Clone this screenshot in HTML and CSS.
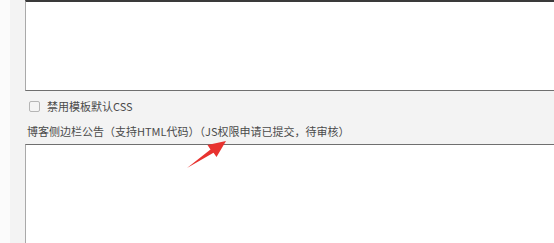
FILE: index.html
```html
<!DOCTYPE html>
<html lang="zh">
<head>
<meta charset="utf-8">
<link rel="stylesheet" href="styles.css">
</head>
<body>
<div class="page">
  <div class="main">
    <div class="area area-top"></div>
    <label class="opt"><span class="box"></span><span class="opt-text">禁用模板默认CSS</span></label>
    <div class="caption">博客侧边栏公告（支持HTML代码）（JS权限申请已提交，待审核）</div>
    <div class="area area-bottom"></div>
  </div>
</div>
<svg class="arrow" width="554" height="243" viewBox="0 0 554 243">
  <polygon points="187,168 210.5,149.5 207.5,145 226,141 216.5,157 213.5,152.8" fill="#e8322f"/>
</svg>
</body>
</html>
```
FILE: styles.css
```css
html, body {
  margin: 0;
  padding: 0;
  background: #fff;
  overflow: hidden;
  width: 554px;
  height: 243px;
}
body {
  position: relative;
  font-family: "Noto Sans CJK SC", "Liberation Sans", sans-serif;
  font-size: 11px;
  color: #4a4a4a;
}
.page {
  display: flex;
  padding-left: 10px;
  height: 243px;
  background: #fbfbfb;
}
.main {
  flex: 1;
  background: #f3f3f3;
  padding-left: 15px;
  overflow: hidden;
}
.area {
  box-sizing: border-box;
  width: 620px;
  background: #fff;
  border: 1px solid #a9a9a9;
}
.area-top {
  height: 91px;
  border-top: 2px solid #3a3a3a;
  border-bottom-color: #6f6f6f;
}
.area-bottom {
  height: 120px;
  border-top-color: #6f6f6f;
  margin-top: 6px;
}
.opt {
  display: flex;
  align-items: center;
  gap: 7px;
  height: 14px;
  margin-top: 8px;
  padding-left: 4px;
}
.box {
  box-sizing: border-box;
  width: 11px;
  height: 11px;
  border: 1px solid #b5b5b5;
  background: #f4f4f4;
  border-radius: 2px;
}
.opt-text {
  line-height: 14px;
}
.caption {
  margin-top: 11px;
  padding-left: 2px;
  line-height: 14px;
  height: 14px;
  white-space: nowrap;
}
.arrow {
  position: absolute;
  left: 0;
  top: 0;
  pointer-events: none;
}
```
